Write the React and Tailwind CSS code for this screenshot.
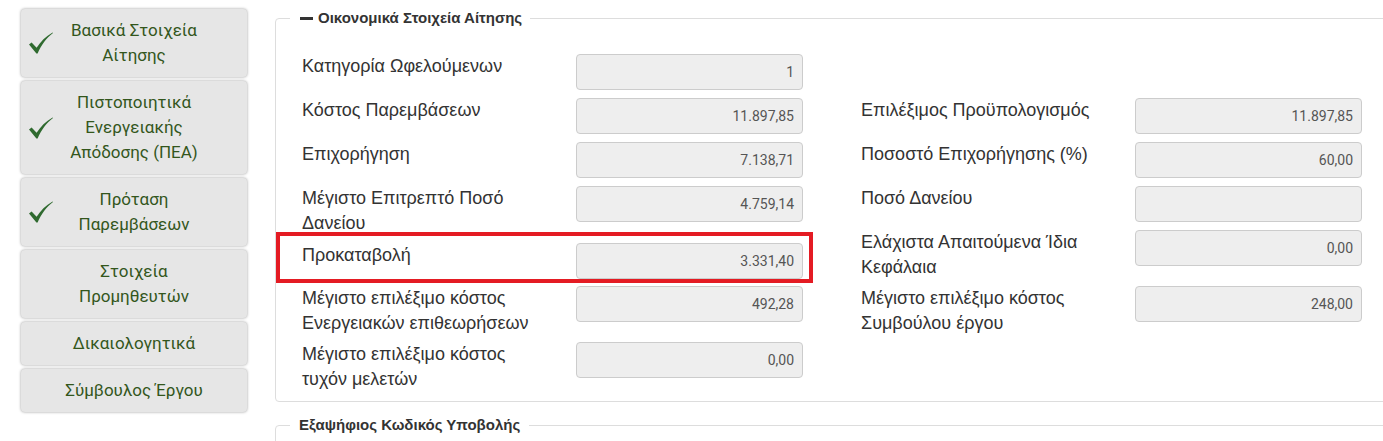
import React from "react";

const navItems = [
  { lines: ["Βασικά Στοιχεία", "Αίτησης"], done: true },
  { lines: ["Πιστοποιητικά", "Ενεργειακής", "Απόδοσης (ΠΕΑ)"], done: true },
  { lines: ["Πρόταση", "Παρεμβάσεων"], done: true },
  { lines: ["Στοιχεία", "Προμηθευτών"], done: false },
  { lines: ["Δικαιολογητικά"], done: false },
  { lines: ["Σύμβουλος Έργου"], done: false },
];

const rows = [
  {
    h: "h-[44px]",
    left: { label: ["Κατηγορία Ωφελούμενων"], value: "1" },
    right: null,
  },
  {
    h: "h-[44px]",
    left: { label: ["Κόστος Παρεμβάσεων"], value: "11.897,85" },
    right: { label: ["Επιλέξιμος Προϋπολογισμός"], value: "11.897,85" },
  },
  {
    h: "h-[44px]",
    left: { label: ["Επιχορήγηση"], value: "7.138,71" },
    right: { label: ["Ποσοστό Επιχορήγησης (%)"], value: "60,00" },
  },
  {
    h: "h-[44px]",
    left: { label: ["Μέγιστο Επιτρεπτό Ποσό", "Δανείου"], value: "4.759,14" },
    right: { label: ["Ποσό Δανείου"], value: "" },
  },
  {
    h: "h-[56px]",
    left: { label: ["Προκαταβολή"], value: "3.331,40", offset: true },
    right: { label: ["Ελάχιστα Απαιτούμενα Ίδια", "Κεφάλαια"], value: "0,00" },
    highlight: true,
  },
  {
    h: "h-[56px]",
    left: { label: ["Μέγιστο επιλέξιμο κόστος", "Ενεργειακών επιθεωρήσεων"], value: "492,28" },
    right: { label: ["Μέγιστο επιλέξιμο κόστος", "Συμβούλου έργου"], value: "248,00" },
  },
  {
    h: "h-[52px]",
    left: { label: ["Μέγιστο επιλέξιμο κόστος", "τυχόν μελετών"], value: "0,00" },
    right: null,
  },
];

const Check = () => (
  <svg width="24" height="22" viewBox="0 0 24 22" className="absolute left-[8px] top-1/2 -translate-y-1/2">
    <path d="M0 12.5 L2.6 10.6 L7.6 15.8 C11.5 9.6 16.6 4.2 23.6 0.4 L24 1 C17.6 5.8 12.4 12.6 8.6 21.6 L7.4 21.6 Z" fill="#2f6a2f" />
  </svg>
);

const Field = ({ item }) => {
  if (!item) return <div className="w-[501px]" />;
  return (
    <div className={`flex w-[501px] items-start ${item.offset ? "pt-[13px]" : ""}`}>
      <div className="w-[274px] text-[18px] leading-[25px] text-[#333] font-['Liberation_Sans',Arial,sans-serif]">
        {item.label.map((l, i) => (
          <div key={i} className="whitespace-nowrap">{l}</div>
        ))}
      </div>
      <div className="w-[227px] h-[36px] bg-[#eeeeee] border border-[#cccccc] rounded-[4px] flex items-center justify-end pr-[8px] text-[14px] text-[#555]">
        {item.value}
      </div>
    </div>
  );
};

export default function App() {
  return (
    <div className="w-full h-[441px] overflow-hidden bg-white flex font-['Roboto','Liberation_Sans',sans-serif]">
      {/* Side navigation */}
      <div className="ml-[21px] mt-[9px] w-[226px] shrink-0 flex flex-col gap-[4px]">
        {navItems.map((n, i) => (
          <div
            key={i}
            className="relative bg-[#e6e6e6] rounded-[4px] shadow-[0_0_3px_rgba(0,0,0,0.4)] py-[9px] text-center text-[17px] leading-[25px] text-[#33561c]"
          >
            {n.done && <Check />}
            {n.lines.map((l, j) => (
              <div key={j}>{l}</div>
            ))}
          </div>
        ))}
      </div>

      {/* Main content */}
      <div className="ml-[28px] mt-[8px] w-[1120px] shrink-0">
        <fieldset className="border border-[#dddddd] rounded-[4px] p-0">
          <legend className="ml-[14px] pl-[10px] pr-[8px] text-[15px] leading-[20px] font-bold text-[#333] font-['Liberation_Sans',Arial,sans-serif] flex items-center">
            <span className="inline-block w-[13px] h-[3px] bg-[#333] mr-[5px]" />
            Οικονομικά Στοιχεία Αίτησης
          </legend>
          <div className="pl-[26px] pt-[26px] pb-[7px]">
            {rows.map((r, i) => (
              <div key={i} className={`relative flex ${r.h}`}>
                {r.highlight && (
                  <div className="absolute left-[-26px] top-[2px] w-[537px] h-[51px] border-[4px] border-[#e41b23]" />
                )}
                <Field item={r.left} />
                <div className="w-[58px]" />
                <Field item={r.right} />
              </div>
            ))}
          </div>
        </fieldset>

        <fieldset className="mt-[13px] border border-[#dddddd] rounded-[4px] p-0 h-[60px]">
          <legend className="ml-[14px] px-[9px] text-[15px] leading-[20px] font-bold text-[#333] font-['Liberation_Sans',Arial,sans-serif]">
            Εξαψήφιος Κωδικός Υποβολής
          </legend>
        </fieldset>
      </div>
    </div>
  );
}
